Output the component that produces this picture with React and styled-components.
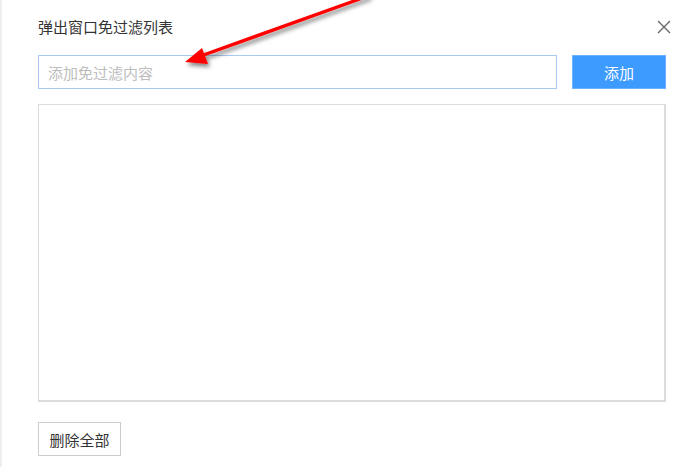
import React from "react";
import styled, { createGlobalStyle } from "styled-components";

const GlobalStyle = createGlobalStyle`
  html, body {
    margin: 0;
    padding: 0;
    background: #fff;
  }
  body {
    font-family: "Noto Sans CJK SC", "Noto Sans", sans-serif;
    color: #333;
  }
`;

function App() {
  return (
    <>
      <GlobalStyle />
      <Dialog>
        <Header>
          <Title>弹出窗口免过滤列表</Title>
          <Close aria-label="关闭">
            <svg width="14" height="14" viewBox="0 0 14 14">
              <path d="M1 1 L13 13 M13 1 L1 13" stroke="#666" strokeWidth="1.4" fill="none" />
            </svg>
          </Close>
        </Header>
        <InputRow>
          <Input placeholder="添加免过滤内容" />
          <PrimaryButton>添加</PrimaryButton>
        </InputRow>
        <ListBox />
        <Footer>
          <PlainButton>删除全部</PlainButton>
        </Footer>
        {/* red annotation arrow lying over the dialog */}
        <Arrow width="696" height="90" viewBox="0 0 696 90">
          <defs>
            <filter id="shadow" x="-20%" y="-50%" width="140%" height="200%">
              <feDropShadow dx="2" dy="3" stdDeviation="2" floodColor="#000" floodOpacity="0.5" />
            </filter>
          </defs>
          <g filter="url(#shadow)">
            <path d="M366 -4 L196 57" stroke="#f00" strokeWidth="3.4" fill="none" strokeLinecap="round" />
            <path d="M183 62 L200 48 L206 64 Z" fill="#f00" />
          </g>
        </Arrow>
      </Dialog>
    </>
  );
}

const Dialog = styled.div`
  position: relative;
  width: 696px;
  height: 467px;
  box-sizing: border-box;
  padding: 17px 30px 0 36px;
  border-left: 2px solid #eeeeee;
  display: flex;
  flex-direction: column;
  overflow: hidden;
`;

const Header = styled.div`
  display: flex;
  align-items: center;
  justify-content: space-between;
  height: 20px;
`;

const Title = styled.div`
  font-size: 15px;
  color: #333;
  line-height: 20px;
`;

const Close = styled.button`
  border: none;
  background: none;
  padding: 0;
  margin-right: -5px;
  width: 14px;
  height: 14px;
  display: flex;
  cursor: pointer;
`;

const InputRow = styled.div`
  display: flex;
  gap: 15px;
  margin-top: 18px;
  height: 34px;
`;

const Input = styled.input`
  flex: 1;
  box-sizing: border-box;
  height: 34px;
  border: 1px solid #a9c9ef;
  padding: 0 9px;
  font-family: inherit;
  font-size: 15px;
  color: #333;
  outline: none;

  &::placeholder {
    color: #bdbdbd;
  }
`;

const PrimaryButton = styled.button`
  width: 94px;
  height: 34px;
  box-sizing: border-box;
  border: 1px solid #6cb2ff;
  background: #3d9bff;
  color: #fff;
  font-family: inherit;
  font-size: 15px;
  cursor: pointer;
`;

const ListBox = styled.div`
  margin-top: 15px;
  height: 298px;
  box-sizing: border-box;
  border: 1px solid #dddddd;
  border-right-width: 2px;
  border-bottom-width: 2px;
`;

const Footer = styled.div`
  display: flex;
  margin-top: 20px;
`;

const PlainButton = styled.button`
  width: 83px;
  height: 34px;
  box-sizing: border-box;
  border: 1px solid #cccccc;
  background: #fff;
  color: #333;
  font-family: inherit;
  font-size: 15px;
  padding: 0;
  cursor: pointer;
`;

const Arrow = styled.svg`
  position: absolute;
  left: 0;
  top: 0;
  pointer-events: none;
`;

export default App;
